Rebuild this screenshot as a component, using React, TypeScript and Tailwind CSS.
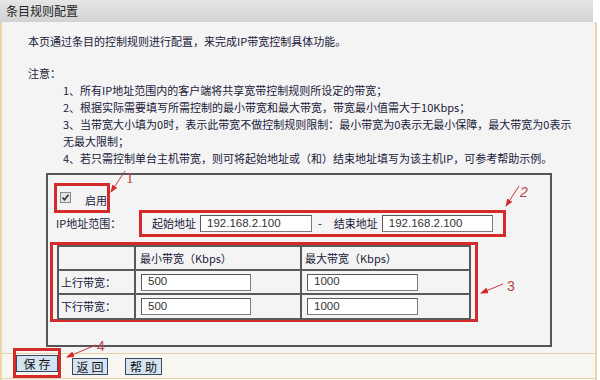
import React from "react";

function Input({ value, w }: { value: string; w: string }) {
  return (
    <div
      className={`${w} h-[17px] bg-white border border-[#7b7b7b] border-t-[#5a5a5a] border-l-[#5a5a5a] flex items-center pl-[6px] font-['Liberation_Sans',sans-serif] text-[11.5px] text-[#333]`}
    >
      {value}
    </div>
  );
}

function Btn({ label, w }: { label: string; w: string }) {
  return (
    <div
      className={`${w} h-[17px] bg-[#d5e3f3] border border-[#3a4660] flex items-center justify-center whitespace-nowrap text-[12px] tracking-[3px] pl-[3px] text-[#111]`}
    >
      {label}
    </div>
  );
}

export default function App() {
  return (
    <div className="w-[600px] h-[380px] bg-white relative overflow-hidden font-['Noto_Sans_CJK_SC','Liberation_Sans',sans-serif] text-[11px] text-[#20203a]">
      <div className="w-[597px] h-full flex flex-col">
        <div className="h-[22px] mr-[4px] bg-gradient-to-b from-[#e6e6e6] to-[#d2d2d2] flex items-center pl-[6px] text-[12px] text-[#222]">
          条目规则配置
        </div>
        <div className="flex-1 flex flex-col border-l-2 border-r-2 border-[#ecd6a8] bg-[#f4f4f4]">
          <div className="h-[332px] border-b border-[#e6d3a8] flex flex-col">
            <p className="mt-[11px] ml-[26px] leading-[17px]">
              本页通过条目的控制规则进行配置，来完成IP带宽控制具体功能。
            </p>
            <p className="mt-[15px] ml-[26px] leading-[17px]">注意：</p>
            <div className="ml-[61px] leading-[17px]">
              <div>1、所有IP地址范围内的客户端将共享宽带控制规则所设定的带宽；</div>
              <div>2、根据实际需要填写所需控制的最小带宽和最大带宽，带宽最小值需大于10Kbps；</div>
              <div>3、当带宽大小填为0时，表示此带宽不做控制规则限制：最小带宽为0表示无最小保障，最大带宽为0表示</div>
              <div>无最大限制；</div>
              <div>4、若只需控制单台主机带宽，则可将起始地址或（和）结束地址填写为该主机IP，可参考帮助示例。</div>
            </div>
            <div className="ml-[44px] mt-[6px] w-[506px] h-[174px] border-2 border-[#555] flex flex-col">
              <div className="ml-[6px] mt-[8px] w-[56px] h-[30px] border-[3px] border-[#d42a2a] flex items-center pl-[3px]">
                <svg width="11" height="11" viewBox="0 0 11 11" className="mt-[-2px]">
                  <rect x="0.5" y="0.5" width="10" height="10" fill="#e6e6e6" stroke="#8a8a8a" />
                  <path d="M2.5 5.5 L4.5 7.8 L8.5 2.8" fill="none" stroke="#333" strokeWidth="1.6" />
                </svg>
                <span className="ml-[14px] mt-[4px]">启用</span>
              </div>
              <div className="flex items-center mt-[-3px]">
                <span className="ml-[8px] w-[83px]">IP地址范围：</span>
                <div className="w-[367px] h-[27px] border-[3px] border-[#d42a2a] flex items-center pl-[10px]">
                  <span>起始地址</span>
                  <div className="ml-[4px]">
                    <Input value="192.168.2.100" w="w-[112px]" />
                  </div>
                  <span className="ml-[6px]">-</span>
                  <span className="ml-[12px]">结束地址</span>
                  <div className="ml-[4px]">
                    <Input value="192.168.2.100" w="w-[111px]" />
                  </div>
                </div>
              </div>
              <div className="ml-[2px] mt-[5px] w-[428px] h-[80px] border-[3px] border-[#d42a2a] pl-[4px] pt-[0px]">
                <div className="w-[414px] grid grid-cols-[75px_164px_167px] grid-rows-[22px_22px_23px] gap-[2px] p-[2px] bg-[#595959]">
                  <div className="bg-[#f4f4f4]" />
                  <div className="bg-[#f4f4f4] flex items-center pl-[4px]">最小带宽（Kbps）</div>
                  <div className="bg-[#f4f4f4] flex items-center pl-[3px]">最大带宽（Kbps）</div>
                  <div className="bg-[#f4f4f4] flex items-center pl-[2px]">上行带宽：</div>
                  <div className="bg-[#f4f4f4] flex items-center pl-[5px]">
                    <Input value="500" w="w-[110px]" />
                  </div>
                  <div className="bg-[#f4f4f4] flex items-center pl-[5px]">
                    <Input value="1000" w="w-[111px]" />
                  </div>
                  <div className="bg-[#f4f4f4] flex items-center pl-[2px]">下行带宽：</div>
                  <div className="bg-[#f4f4f4] flex items-center pl-[5px]">
                    <Input value="500" w="w-[110px]" />
                  </div>
                  <div className="bg-[#f4f4f4] flex items-center pl-[5px]">
                    <Input value="1000" w="w-[111px]" />
                  </div>
                </div>
              </div>
            </div>
          </div>
          <div className="h-[25px] border-b border-[#e6d3a8] bg-[#f8f6f1] flex items-start">
            <div className="relative ml-[11px] mt-[-6px] w-[48px] h-[30px] border-[3px] border-[#d42a2a] pt-[4px]">
              <Btn label="保存" w="w-[42px]" />
            </div>
            <div className="ml-[11px] mt-[4px]">
              <Btn label="返回" w="w-[36px]" />
            </div>
            <div className="ml-[17px] mt-[4px]">
              <Btn label="帮助" w="w-[37px]" />
            </div>
          </div>
        </div>
      </div>
      <svg className="absolute inset-0 pointer-events-none" width="600" height="380" viewBox="0 0 600 380">
        <defs>
          <marker id="ah" markerWidth="8" markerHeight="6" refX="7" refY="3" orient="auto" markerUnits="userSpaceOnUse">
            <path d="M0 0 L8 3 L0 6 Z" fill="#d42a2a" />
          </marker>
        </defs>
        <g stroke="#c93a3a" strokeWidth="1" fill="none">
          <line x1="125" y1="171" x2="111" y2="192" markerEnd="url(#ah)" />
          <line x1="519" y1="186" x2="506" y2="206" markerEnd="url(#ah)" />
          <line x1="503" y1="284" x2="481" y2="293" markerEnd="url(#ah)" />
          <line x1="96" y1="345" x2="67" y2="357" markerEnd="url(#ah)" />
        </g>
        <g fill="#b54545" fontFamily="'Liberation Serif', serif" fontSize="15">
          <text x="126" y="183">1</text>
        </g>
        <g fill="#b54545" fontFamily="'Liberation Sans', sans-serif" fontSize="14">
          <text x="520" y="197" fontStyle="italic">2</text>
          <text x="507" y="291">3</text>
          <text x="97" y="351">4</text>
        </g>
      </svg>
    </div>
  );
}
